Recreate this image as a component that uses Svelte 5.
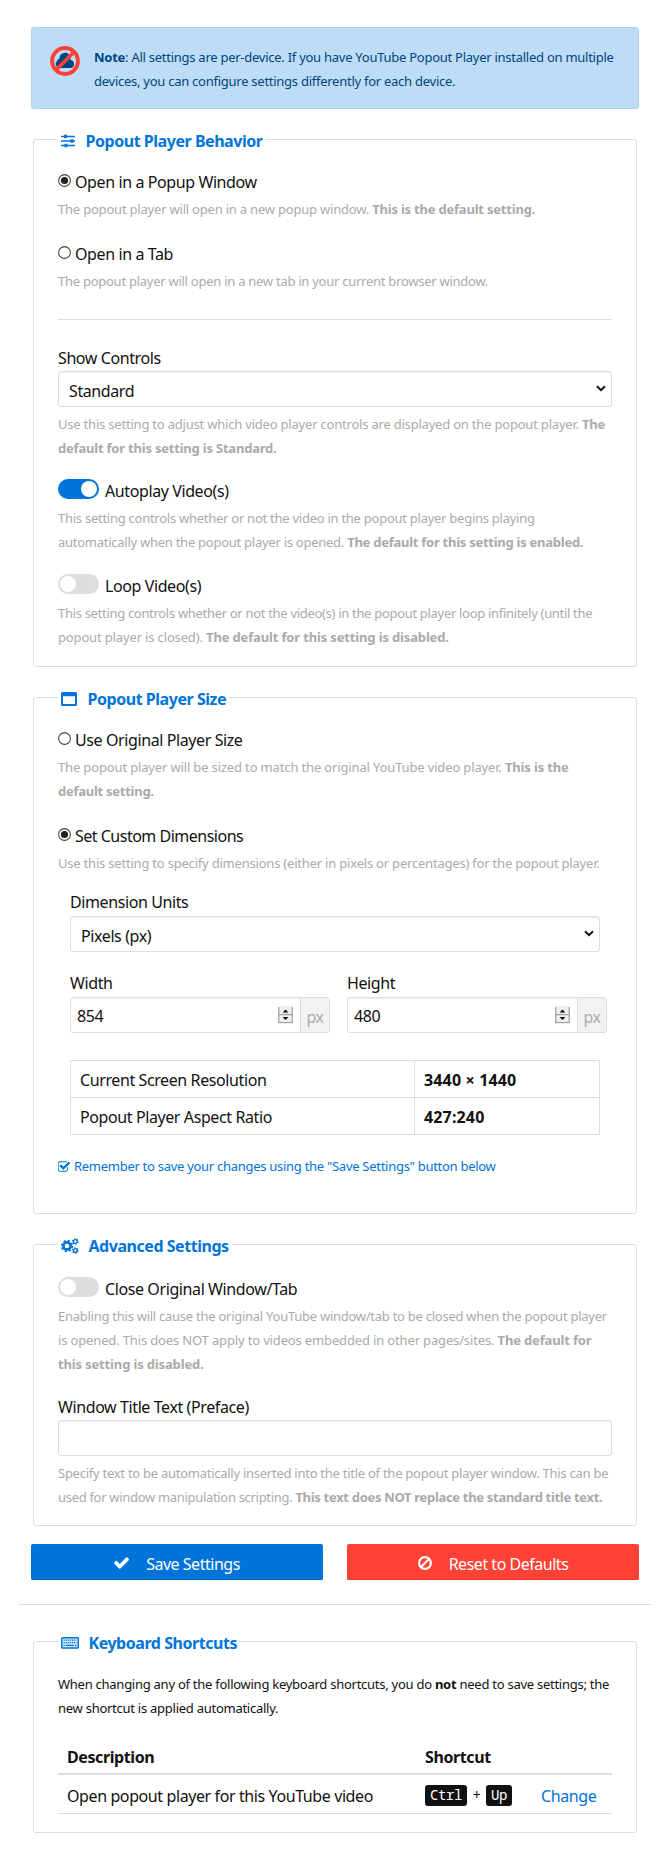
<script>
  let behavior = $state('popup');
  let size = $state('custom');
  let autoplay = $state(true);
  let loop = $state(false);
  let closeOriginal = $state(false);
  let width = $state('854');
  let height = $state('480');
  let preface = $state('');
</script>

{#snippet radio(checked)}
  <svg class="radio" viewBox="0 0 13 13" aria-hidden="true">
    <circle cx="6.5" cy="6.5" r="5.9" fill="#fff" stroke="#444" stroke-width="1.1" />
    {#if checked}<circle cx="6.5" cy="6.5" r="3.6" fill="#222" />{/if}
  </svg>
{/snippet}

{#snippet spinner()}
  <svg class="spinner" viewBox="0 0 15 18" aria-hidden="true">
    <rect width="15" height="18" fill="#f0f0f0" />
    <path d="M.8 1v15.5M14.2 1v15.5M0 8.6h15M0 16.5h15" stroke="#a0a0a0" stroke-width="1.2" />
    <path d="M4.700 6.400l2.800-3L10.300 6.400zM4.700 11l2.800 3L10.300 11z" fill="#000" />
  </svg>
{/snippet}

{#snippet chevron()}
  <svg class="chevron" viewBox="0 0 10 7" aria-hidden="true">
    <path d="M1 1.2l4 4 4-4" fill="none" stroke="#111" stroke-width="2" />
  </svg>
{/snippet}

<main>
  <aside class="note">
    <svg class="nocloud" viewBox="0 0 30 30" aria-hidden="true">
      <path d="M9.500 22a4 4 0 0 1-2.500-7 4 4 0 0 1 2.500-2.600A5.400 5.400 0 0 1 20 10.500q1 1.600.5 3.500a4.200 4.200 0 0 1 3.500 4.200A3.800 3.800 0 0 1 20.500 22z" fill="#00457e" />
      <circle cx="15" cy="15" r="12.9" fill="none" stroke="#ff4136" stroke-width="4" />
      <path d="M24 6L6 24" stroke="#ff4136" stroke-width="3.800" />
    </svg>
    <p><b>Note</b>: All settings are per-device. If you have YouTube Popout Player installed on multiple<br />devices, you can configure settings differently for each device.</p>
  </aside>

  <fieldset class="behavior">
    <legend>
      <svg style:width="15px" viewBox="0 0 15 14" aria-hidden="true">
        <path d="M0 2.500h14M0 7h14M0 11.500h14" stroke="#0074d9" stroke-width="1.500" />
        <path d="M3 .7h3v3.600H3zM9.500 5.200h3v3.600h-3zM3.500 9.700h3v3.600h-3z" fill="#0074d9" />
      </svg>Popout Player Behavior
    </legend>
    <div class="item">
      <button class="row" onclick={() => (behavior = 'popup')}>{@render radio(behavior === 'popup')}Open in a Popup Window</button>
      <p class="help wider">The popout player will open in a new popup window. <b>This is the default setting.</b></p>
    </div>
    <div class="item">
      <button class="row" onclick={() => (behavior = 'tab')}>{@render radio(behavior === 'tab')}Open in a Tab</button>
      <p class="help">The popout player will open in a new tab in your current browser window.</p>
    </div>
    <hr />
    <div class="item">
      <div class="label">Show Controls</div>
      <div class="select">Standard{@render chevron()}</div>
      <p class="help after wider">Use this setting to adjust which video player controls are displayed on the popout player. <b>The<br />default for this setting is Standard.</b></p>
    </div>
    <div class="item toggles">
      <button class="row" onclick={() => (autoplay = !autoplay)}><i class="toggle" class:on={autoplay}></i>Autoplay Video(s)</button>
      <p class="help">This setting controls whether or not the video in the popout player begins playing<br />automatically when the popout player is opened. <b>The default for this setting is enabled.</b></p>
    </div>
    <div class="item toggles">
      <button class="row" onclick={() => (loop = !loop)}><i class="toggle" class:on={loop}></i>Loop Video(s)</button>
      <p class="help"><span class="tight">This setting controls whether or not the video(s) in the popout player loop infinitely (until the</span><br /><span class="loose">popout player is closed). <b>The default for this setting is disabled.</b></span></p>
    </div>
  </fieldset>

  <fieldset class="size">
    <legend>
      <svg style:width="17px" viewBox="0 0 17 14" aria-hidden="true">
        <path d="M1.500 0h13q1.500 0 1.500 1.500v11q0 1.500-1.500 1.500h-13Q0 14 0 12.500v-11Q0 0 1.500 0zM2 4.300V12h12V4.300z" fill="#0074d9" fill-rule="evenodd" />
      </svg>Popout Player Size
    </legend>
    <div class="item">
      <button class="row" onclick={() => (size = 'original')}>{@render radio(size === 'original')}Use Original Player Size</button>
      <p class="help"><span class="loose">The popout player will be sized to match the original YouTube video player. <b>This is the</b></span><br /><b>default setting.</b></p>
    </div>
    <div class="item">
      <button class="row custom" onclick={() => (size = 'custom')}>{@render radio(size === 'custom')}Set Custom Dimensions</button>
      <p class="help wider">Use this setting to specify dimensions (either in pixels or percentages) for the popout player.</p>
    </div>
    <div class="dimensions">
      <div class="label">Dimension Units</div>
      <div class="select">Pixels (px){@render chevron()}</div>
      <div class="pair">
        <div>
          <div class="label">Width</div>
          <div class="number"><input bind:value={width} aria-label="Width" />{@render spinner()}<span>px</span></div>
        </div>
        <div>
          <div class="label">Height</div>
          <div class="number"><input bind:value={height} aria-label="Height" />{@render spinner()}<span>px</span></div>
        </div>
      </div>
      <div class="info">
        <div>Current Screen Resolution</div><div><b>3440 × 1440</b></div>
        <div>Popout Player Aspect Ratio</div><div><b>427:240</b></div>
      </div>
    </div>
    <p class="remember">
      <svg viewBox="100 128 1640 1408" aria-hidden="true">
        <path fill="#0074d9" d="M1472 930v318q0 119-84.5 203.5t-203.5 84.5h-832q-119 0-203.5-84.5t-84.5-203.5v-832q0-119 84.5-203.5t203.5-84.5h832q63 0 117 25 15 7 18 23 3 17-9 29l-49 49q-10 10-23 10-3 0-9-2-23-6-45-6h-832q-66 0-113 47t-47 113v832q0 66 47 113t113 47h832q66 0 113-47t47-113v-254q0-13 9-22l64-64q10-10 23-10 6 0 12 3 20 8 20 29zm231-489l-814 814q-24 24-57 24t-57-24l-430-430q-24-24-24-57t24-57l110-110q24-24 57-24t57 24l263 263 647-647q24-24 57-24t57 24l110 110q24 24 24 57t-24 57z" />
      </svg>Remember to save your changes using the "Save Settings" button below
    </p>
  </fieldset>

  <fieldset class="advanced">
    <legend>
      <svg style:width="18px" class="cogs" viewBox="0 0 18 16" aria-hidden="true">
        <g fill="none" stroke="#0074d9">
          <circle cx="6" cy="8" r="3.600" stroke-width="2.600" />
          <circle cx="6" cy="8" r="5.300" stroke-width="1.800" stroke-dasharray="2.080 2.080" />
          <circle cx="14.300" cy="3.500" r="1.900" stroke-width="1.400" />
          <circle cx="14.300" cy="3.500" r="2.800" stroke-width="1.100" stroke-dasharray="1.470 1.470" />
          <circle cx="14.300" cy="12.500" r="1.900" stroke-width="1.400" />
          <circle cx="14.300" cy="12.500" r="2.800" stroke-width="1.100" stroke-dasharray="1.470 1.470" />
        </g>
      </svg>Advanced Settings
    </legend>
    <div class="item">
      <button class="row" onclick={() => (closeOriginal = !closeOriginal)}><i class="toggle" class:on={closeOriginal}></i>Close Original Window/Tab</button>
      <p class="help">Enabling this will cause the original YouTube window/tab to be closed when the popout player<br /><span class="loose">is opened. This does NOT apply to videos embedded in other pages/sites. <b>The default for</b><br /><b>this setting is disabled.</b></span></p>
    </div>
    <div class="item preface">
      <div class="label">Window Title Text (Preface)</div>
      <input class="text" bind:value={preface} aria-label="Window Title Text (Preface)" />
      <p class="help after">Specify text to be automatically inserted into the title of the popout player window. This can be<br /><span class="tight">used for window manipulation scripting. <b>This text does NOT replace the standard title text.</b></span></p>
    </div>
  </fieldset>

  <div class="actions">
    <button class="save">
      <svg style:width="15px" viewBox="121 300 1550 1230" aria-hidden="true">
        <path fill="#fff" d="M1671 566q0 40-28 68l-724 724-136 136q-28 28-68 28t-68-28l-136-136-362-362q-28-28-28-68t28-68l136-136q28-28 68-28t68 28l294 295 656-657q28-28 68-28t68 28l136 136q28 28 28 68z" />
      </svg>Save Settings
    </button>
    <button class="reset">
      <svg style:width="14px" viewBox="0 0 14 14" aria-hidden="true">
        <circle cx="7" cy="7" r="5.900" fill="none" stroke="#fff" stroke-width="2.200" />
        <path d="M11 3L3 11" stroke="#fff" stroke-width="2.200" />
      </svg>Reset to Defaults
    </button>
  </div>

  <hr class="wide" />

  <fieldset class="keyboard">
    <legend>
      <svg style:width="18px" viewBox="0 0 18 12" aria-hidden="true">
        <rect x=".7" y=".7" width="16.600" height="10.300" rx=".6" fill="#d6e9fa" stroke="#0074d9" stroke-width="1.400" />
        <path d="M2.500 3.200h13M2.500 5.700h13" stroke="#0074d9" stroke-width="1.300" stroke-dasharray="1.300 .8" />
        <path d="M2.500 8.400h1.400M4.900 8.400h8M14 8.400h1.500" stroke="#0074d9" stroke-width="1.300" />
      </svg>Keyboard Shortcuts
    </legend>
    <p class="intro">When changing any of the following keyboard shortcuts, you do <b>not</b> need to save settings; the<br />new shortcut is applied automatically.</p>
    <div class="shortcuts head"><b>Description</b><b>Shortcut</b></div>
    <div class="shortcuts">
      <span>Open popout player for this YouTube video</span>
      <span class="keys"><kbd>Ctrl</kbd><em>+</em><kbd>Up</kbd></span>
      <span class="change">Change</span>
    </div>
  </fieldset>
</main>

<style>
  :global(body) { margin: 0; background: #fff; }
  main {
    box-sizing: border-box;
    width: 670px;
    height: 1860px;
    padding: 27px 31px 0;
    font: 16px/24px "Noto Sans", "Open Sans", sans-serif;
    letter-spacing: -0.4px;
    color: #111;
    white-space: nowrap;
  }
  main * { box-sizing: border-box; }
  p { margin: 0; font-size: 13px; line-height: 24px; letter-spacing: -0.26px; }
  button, input { font: inherit; letter-spacing: inherit; color: inherit; margin: 0; }
  button { border: 0; background: none; padding: 0; }
  input { outline: 0; }
  .wider { letter-spacing: -0.205px; }
  .loose { letter-spacing: -0.15px; }
  .tight { letter-spacing: -0.31px; }

  .note {
    display: flex;
    height: 82px;
    padding: 17px 18px;
    border: 1px solid #b1d2ef;
    border-radius: 3px;
    background: #bedcf5;
    color: #00457e;
  }
  .nocloud { flex: none; width: 30px; height: 30px; margin: 1px 14px 0 0; }

  fieldset {
    min-width: 0;
    margin: 0 2px;
    padding: 0 24px;
    border: 1px solid #ddd;
    border-radius: 3px;
  }
  legend {
    display: flex;
    align-items: center;
    height: 23px;
    padding: 2px 3px 0;
    font-weight: 700;
    letter-spacing: -0.46px;
    color: #0074d9;
  }
  legend svg { margin-right: 9.5px; }
  .behavior { height: 539px; margin-top: 19px; }
  .size { height: 528px; margin-top: 19px; }
  .advanced { height: 293px; margin-top: 19px; }
  .keyboard { height: 203px; margin-top: 25px; }

  .row { display: flex; align-items: center; height: 24px; }
  .custom { letter-spacing: -0.5px; }
  .radio { width: 13px; height: 13px; margin: 0 4px 4px 0; }
  .item { padding-top: 21px; }
  .behavior legend + .item, .size legend + .item, .preface { padding-top: 19px; }
  .help { padding-top: 3px; color: #aaa; }
  .help.after { padding-top: 5px; }
  .toggles { padding-top: 19px; }
  .toggles + .toggles { padding-top: 20px; }
  .toggle {
    width: 41px;
    height: 20px;
    margin: 0 6px 4px 0;
    padding: 2px;
    border-radius: 10px;
    background: #ddd;
  }
  .toggle::before {
    content: "";
    display: block;
    width: 16px;
    height: 16px;
    border-radius: 50%;
    background: #fff;
  }
  .toggle.on { background: #0074d9; }
  .toggle.on::before { margin-left: 21px; }
  hr { height: 1px; margin: 26px 0 5px; border: 0; background: #ddd; }
  .label { height: 25px; }
  .select, .text {
    display: flex;
    justify-content: space-between;
    align-items: center;
    width: 100%;
    height: 36px;
    padding: 4px 5px 0 10px;
    border: 1px solid #ddd;
    border-radius: 3px;
    background: #fff;
    box-shadow: inset 0 1px 1px #eee;
  }
  .chevron { width: 10px; height: 7px; margin-bottom: 6px; }

  .dimensions { padding: 15px 12px 0; }
  .dimensions .label { height: 26px; }
  .pair { display: grid; grid-template-columns: 260px 260px; gap: 17px; margin: 19px 0 27px; }
  .number {
    display: flex;
    align-items: center;
    height: 36px;
    border: 1px solid #ddd;
    border-radius: 3px;
    box-shadow: inset 0 1px 1px #eee;
  }
  .number input { flex: 1; min-width: 0; padding: 2px 6px 0; border: 0; background: none; }
  .number span {
    width: 29px;
    height: 34px;
    padding-top: 7px;
    border-left: 1px solid #ddd;
    background: #f2f2f2;
    color: #aaa;
    text-align: center;
  }
  .spinner { width: 15px; height: 18px; margin-right: 7px; }
  .info {
    display: grid;
    grid-template-columns: 344px 1fr;
    border: solid #ddd;
    border-width: 1px 0 0 1px;
  }
  .info div {
    height: 37px;
    padding: 7px 9px 0;
    border: solid #ddd;
    border-width: 0 1px 1px 0;
  }
  .info b { letter-spacing: 0.15px; }
  .remember { display: flex; align-items: center; padding-top: 19px; letter-spacing: -0.28px; color: #0074d9; }
  .remember svg { width: 12px; height: 11px; margin-right: 4px; }

  .actions { display: grid; grid-template-columns: 1fr 1fr; gap: 24px; margin-top: 18px; }
  .actions button {
    display: flex;
    justify-content: center;
    align-items: center;
    height: 36px;
    padding-top: 3px;
    border-radius: 2px;
    letter-spacing: -0.48px;
    color: #fff;
  }
  .actions svg { margin: 0 17px 1px 0; }
  .save { background: #0074d9; box-shadow: inset 0 -1px #0067c2; }
  .reset { background: #ff4136; box-shadow: inset 0 -1px #e63a30; }
  .wide { margin: 24px -12px 0; }

  .intro { padding-top: 19px; }
  .shortcuts {
    display: grid;
    grid-template-columns: 358px 116px 1fr;
    height: 39px;
    padding: 9px 9px 0;
    border-bottom: 1px solid #ddd;
  }
  .head { height: 55px; padding-top: 25px; border-bottom-width: 2px; }
  .keys { display: flex; align-items: center; height: 22px; }
  kbd {
    height: 21px;
    padding: 0 5px;
    border-radius: 3px;
    background: #111;
    color: #fff;
    font: 14px/20px "Noto Sans Mono", "DejaVu Sans Mono", monospace;
    letter-spacing: -0.4px;
  }
  em { width: 19px; text-align: center; font-size: 14px; line-height: 20px; font-style: normal; }
  .change { color: #0074d9; }
</style>
